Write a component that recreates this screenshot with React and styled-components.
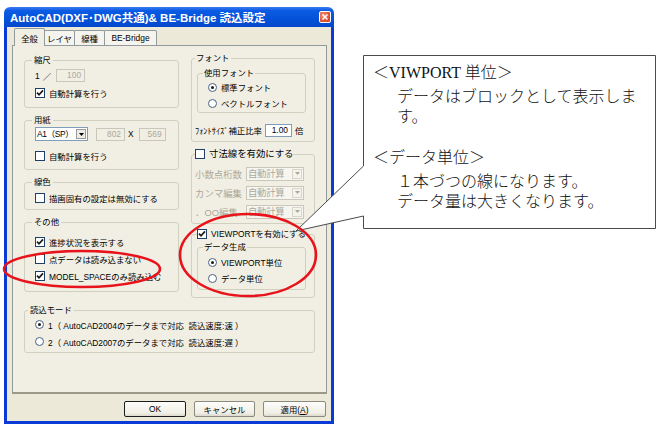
import React from "react";
import styled, { createGlobalStyle } from "styled-components";

const GlobalStyle = createGlobalStyle`
  html, body {
    margin: 0;
    padding: 0;
    background: #fff;
  }
  body {
    font-family: "Liberation Sans", "Noto Sans CJK JP", sans-serif;
  }
`;

const Page = styled.div`
    position: relative;
    width: 667px;
    height: 428px;
    box-sizing: border-box;
    padding: 7px 0 0 4px;
    overflow: hidden;
`;

const Window = styled.div`
    width: 330px;
    height: 417px;
    display: flex;
    flex-direction: column;
    font-size: 8.4px;
    color: #000;
`;

const TitleBar = styled.div`
    height: 20px;
    flex: none;
    display: flex;
    align-items: center;
    justify-content: space-between;
    padding: 0 3px 0 6px;
    border-radius: 6px 6px 0 0;
    background: linear-gradient(#3d7cf2 0%, #0b5be4 18%, #0452d8 60%, #0548cc 100%);
    color: #fff;
`;

const Title = styled.span`
    font-size: 11.5px;
    font-weight: bold;
    white-space: nowrap;
`;

const CloseBtn = styled.div`
    width: 12px;
    height: 12px;
    box-sizing: border-box;
    border: 1px solid #fff;
    border-radius: 2px;
    background: radial-gradient(circle at 35% 35%, #f49a7e, #da4a2c 70%);
    display: flex;
    align-items: center;
    justify-content: center;
`;

const Frame = styled.div`
    flex: 1;
    display: flex;
    flex-direction: column;
    padding: 1px 4px 4px 5px;
    border: 3px solid #0a3bd6;
    border-top: none;
    background: #ece9d8;
`;

const TabRow = styled.div`
    height: 17px;
    display: flex;
    align-items: flex-end;
    padding-left: 2px;
    position: relative;
    z-index: 1;
`;

const Tab = styled.div`
    width: ${p => p.$w}px;
    height: ${p => (p.$active ? 18 : 15)}px;
    margin-bottom: ${p => (p.$active ? -1 : 0)}px;
    margin-left: -1px;
    box-sizing: border-box;
    border: 1px solid #919b9c;
    border-bottom: none;
    border-radius: 2px 2px 0 0;
    background: ${p => (p.$active ? "#f1efe4" : "#f5f4ee")};
    display: flex;
    align-items: center;
    justify-content: center;
    white-space: nowrap;
    &:first-child {
        margin-left: 0;
    }
`;

const Panel = styled.div`
    height: 349px;
    box-sizing: border-box;
    border: 1px solid #919b9c;
    border-bottom: 2px solid #9c988a;
    background: #f1efe4;
    padding: 6px 11px 0 11px;
    display: flex;
    flex-direction: column;
    gap: 6px;
`;

const Columns = styled.div`
    display: grid;
    grid-template-columns: 155px 124px;
    column-gap: 12px;
    align-items: start;
`;

const Column = styled.div`
    display: flex;
    flex-direction: column;
    gap: 6px;
    margin-top: ${p => p.$mt || 0}px;
`;

const Group = styled.fieldset`
    margin: ${p => p.$m || "0"};
    height: ${p => p.$h}px;
    box-sizing: border-box;
    padding: ${p => p.$pt || 0}px ${p => p.$pr ?? 6}px 0 ${p => p.$pl ?? 10}px;
    border: 1px solid #d0d0bf;
    border-radius: 3px;
    min-width: 0;
    font-size: ${p => p.$fs || 8.4}px;
`;

const Legend = styled.legend`
    padding: 0 ${p => p.$pad ?? 2}px;
    margin-left: ${p => p.$ml || 0}px;
    line-height: 12px;
    height: 12px;
    display: flex;
    align-items: center;
    white-space: nowrap;
`;

const Row = styled.div`
    height: ${p => p.$h || 17}px;
    margin-top: ${p => p.$mt || 0}px;
    display: flex;
    align-items: center;
    white-space: nowrap;
    color: ${p => (p.$disabled ? "#aca899" : "inherit")};
`;

const RowLabel = styled.span`
    width: ${p => p.$w}px;
    flex: none;
`;

const Option = styled.span`
    display: inline-flex;
    align-items: center;
    gap: 4px;
    color: ${p => (p.$disabled ? "#aca899" : "inherit")};
`;

const Box = styled.span`
    width: 10px;
    height: 10px;
    box-sizing: border-box;
    flex: none;
    border: 1px solid #1e3f66;
    background: #fff;
    display: inline-flex;
    align-items: center;
    justify-content: center;
`;

const Circle = styled.span`
    width: 9px;
    height: 9px;
    box-sizing: border-box;
    flex: none;
    border: 1px solid #4a6285;
    border-radius: 50%;
    background: #fff;
    display: inline-flex;
    align-items: center;
    justify-content: center;
`;

const Dot = styled.span`
    width: 3px;
    height: 3px;
    border-radius: 50%;
    background: #1b1b1b;
`;

const Field = styled.span`
    width: ${p => p.$w}px;
    height: 13px;
    margin-left: ${p => p.$ml || 0}px;
    box-sizing: border-box;
    flex: none;
    border: 1px solid ${p => (p.$disabled ? "#c9c7ba" : "#7f9db9")};
    background: ${p => (p.$disabled ? "#f1efe4" : "#fff")};
    color: ${p => (p.$disabled ? "#aca899" : "#000")};
    text-align: right;
    padding-right: 3px;
    line-height: 11px;
`;

const Select = styled.span`
    width: ${p => p.$w}px;
    height: 14px;
    margin-left: ${p => p.$ml || 0}px;
    box-sizing: border-box;
    flex: none;
    display: flex;
    align-items: stretch;
    border: 1px solid ${p => (p.$disabled ? "#c9c7ba" : "#7f9db9")};
    background: ${p => (p.$disabled ? "#f6f5ef" : "#fff")};
    color: ${p => (p.$disabled ? "#aca899" : "#000")};
`;

const SelectText = styled.span`
    flex: 1;
    min-width: 0;
    padding-left: 1px;
    line-height: 12px;
    letter-spacing: -0.3px;
    white-space: nowrap;
`;

const ArrowBtn = styled.span`
    width: 10px;
    flex: none;
    box-sizing: border-box;
    margin: 1px;
    border: 1px solid ${p => (p.$disabled ? "#d8d6cc" : "#9a9a9a")};
    background: ${p => (p.$disabled ? "#f4f3ec" : "#ecebe6")};
    display: flex;
    align-items: center;
    justify-content: center;
`;

const Times = styled.span`
    margin-left: 3px;
`;

const Unit = styled.span`
    margin-left: 3px;
`;

const ButtonRow = styled.div`
    margin-top: 7px;
    display: flex;
    justify-content: flex-end;
    gap: 8px;
    padding-right: 1px;
`;

const Button = styled.button`
    width: ${p => p.$w}px;
    height: 16px;
    padding: 0;
    font: inherit;
    font-size: 8.4px;
    color: #000;
    border: 1px solid ${p => (p.$default ? "#1c1c1c" : "#8a8a80")};
    border-radius: 2px;
    background: linear-gradient(#fdfdfb, #f0eee4 80%, #dcd9cc);
    u {
        text-decoration: underline;
    }
`;

const Callout = styled.div`
    position: absolute;
    left: 290px;
    top: 50px;
    width: 370px;
    height: 186px;
`;

const BubbleShape = styled.svg`
    position: absolute;
    left: 0;
    top: 0;
`;

const CalloutText = styled.div`
    position: relative;
    padding: 13px 0 0 83px;
    font-family: "Liberation Serif", "Noto Sans CJK JP", serif;
    font-size: 16px;
    font-weight: 300;
    color: #111;
    white-space: nowrap;
`;

const Para = styled.div`
    margin-top: ${p => p.$mt || 0}px;
`;

const Head = styled.div`
    line-height: 20px;
`;

const Body = styled.div`
    margin-top: 4px;
    padding-left: 24px;
    line-height: 20px;
`;

const Marks = styled.svg`
    position: absolute;
    left: 0;
    top: 0;
    pointer-events: none;
`;

const CheckMark = () => (
    <svg width="8" height="8" viewBox="0 0 8 8">
        <path d="M1 3.6 L3 5.8 L7 1.4" fill="none" stroke="#1b1b1b" strokeWidth="1.7"/>
    </svg>
);

const Check = ({checked, disabled, children}) => (
    <Option $disabled={disabled}>
        <Box>{checked && <CheckMark/>}</Box>
        {children && <span>{children}</span>}
    </Option>
);

const Radio = ({checked, children}) => (
    <Option>
        <Circle>{checked && <Dot/>}</Circle>
        <span>{children}</span>
    </Option>
);

const Arrow = ({disabled}) => (
    <svg width="5" height="3" viewBox="0 0 5 3">
        <path d="M0 0 H5 L2.5 3 Z" fill={disabled ? "#aca899" : "#000"}/>
    </svg>
);

const Dropdown = ({w, ml, disabled, children}) => (
    <Select $w={w} $ml={ml} $disabled={disabled}>
        <SelectText>{children}</SelectText>
        <ArrowBtn $disabled={disabled}><Arrow disabled={disabled}/></ArrowBtn>
    </Select>
);

export default function App() {
    return (
        <>
            <GlobalStyle/>
            <Page>
                <Window>
                    <TitleBar>
                        <Title>AutoCAD(DXF･DWG共通)&amp; BE-Bridge 読込設定</Title>
                        <CloseBtn>
                            <svg width="6" height="6" viewBox="0 0 6 6">
                                <path d="M0.5 0.5 L5.5 5.5 M5.5 0.5 L0.5 5.5" stroke="#fff" strokeWidth="1.4"/>
                            </svg>
                        </CloseBtn>
                    </TitleBar>
                    <Frame>
                        <TabRow>
                            <Tab $active $w={31}>全般</Tab>
                            <Tab $w={31}>レイヤ</Tab>
                            <Tab $w={31}>線種</Tab>
                            <Tab $w={53}>BE-Bridge</Tab>
                        </TabRow>
                        <Panel>
                            <Columns>
                                <Column $mt={2}>
                                    <Group $h={54} $pt={1}>
                                        <Legend $ml={-3}>縮尺</Legend>
                                        <Row>
                                            <span>1</span>
                                            <Unit>／</Unit>
                                            <Field $w={29} $ml={5} $disabled>100</Field>
                                        </Row>
                                        <Row><Check checked>自動計算を行う</Check></Row>
                                    </Group>
                                    <Group $h={56}>
                                        <Legend $ml={-3}>用紙</Legend>
                                        <Row $h={16}>
                                            <Dropdown w={53}>A1（SP）</Dropdown>
                                            <Field $w={29} $ml={8} $disabled>802</Field>
                                            <Times>X</Times>
                                            <Field $w={27} $ml={5} $disabled>569</Field>
                                        </Row>
                                        <Row $mt={5}><Check>自動計算を行う</Check></Row>
                                    </Group>
                                    <Group $h={34} $pt={1}>
                                        <Legend $ml={-3}>線色</Legend>
                                        <Row><Check>描画固有の設定は無効にする</Check></Row>
                                    </Group>
                                    <Group $h={76} $pt={5}>
                                        <Legend $ml={-3}>その他</Legend>
                                        <Row><Check checked>進捗状況を表示する</Check></Row>
                                        <Row><Check>点データは読み込まない</Check></Row>
                                        <Row><Check checked>MODEL_SPACEのみ読み込む</Check></Row>
                                    </Group>
                                </Column>
                                <Column>
                                    <Group $h={90} $pl={3} $pr={8}>
                                        <Legend $pad={1}>フォント</Legend>
                                        <Group $h={46} $pl={10} $pr={4} $m="3px 0 0 2px">
                                            <Legend $ml={-5} $pad={1}>使用フォント</Legend>
                                            <Row $h={16}><Radio checked>標準フォント</Radio></Row>
                                            <Row $h={16}><Radio>ベクトルフォント</Radio></Row>
                                        </Group>
                                        <Row $h={18} $mt={8}>
                                            <span>ﾌｫﾝﾄｻｲｽﾞ補正比率</span>
                                            <Field $w={27} $ml={3}>1.00</Field>
                                            <Unit>倍</Unit>
                                        </Row>
                                    </Group>
                                    <Group $h={76} $pl={3} $pr={8} $pt={4} $fs={9.4}>
                                        <Legend $pad={0}><Check>寸法線を有効にする</Check></Legend>
                                        <Row $h={19} $disabled>
                                            <RowLabel $w={51}>小数点桁数</RowLabel>
                                            <Dropdown w={58} disabled>自動計算</Dropdown>
                                        </Row>
                                        <Row $h={19} $disabled>
                                            <RowLabel $w={51}>カンマ編集</RowLabel>
                                            <Dropdown w={58} disabled>自動計算</Dropdown>
                                        </Row>
                                        <Row $h={19} $disabled>
                                            <RowLabel $w={51}>．OO編集</RowLabel>
                                            <Dropdown w={58} disabled>自動計算</Dropdown>
                                        </Row>
                                    </Group>
                                    <Group $h={70} $pl={3} $pr={8} $m="-2px 0 0 0">
                                        <Legend $pad={0} $ml={2}><Check checked>VIEWPORTを有効にする</Check></Legend>
                                        <Group $h={49} $pl={10} $pr={4} $pt={1} $m="1px 0 0 2px">
                                            <Legend $ml={-5} $pad={1}>データ生成</Legend>
                                            <Row $h={16}><Radio checked>VIEWPORT単位</Radio></Row>
                                            <Row $h={16}><Radio>データ単位</Radio></Row>
                                        </Group>
                                    </Group>
                                </Column>
                            </Columns>
                            <Group $h={49}>
                                <Legend $ml={-7}>読込モード</Legend>
                                <Row><Radio checked>1（ AutoCAD2004のデータまで対応&nbsp; 読込速度:速 ）</Radio></Row>
                                <Row><Radio>2（ AutoCAD2007のデータまで対応&nbsp; 読込速度:遅 ）</Radio></Row>
                            </Group>
                        </Panel>
                        <ButtonRow>
                            <Button $w={62} $default>OK</Button>
                            <Button $w={61}>キャンセル</Button>
                            <Button $w={63}>適用(<u>A</u>)</Button>
                        </ButtonRow>
                    </Frame>
                </Window>

                <Callout>
                    <BubbleShape width="370" height="186" viewBox="0 0 370 186">
                        <path
                            d="M73.5 5.5 H365.5 V178.5 H73.5 V166 L6 181 L73.5 116 Z"
                            fill="#fff"
                            stroke="#4a4a4a"
                            strokeWidth="1"
                        />
                    </BubbleShape>
                    <CalloutText>
                        <Para>
                            <Head>＜VIWPORT 単位＞</Head>
                            <Body>データはブロックとして表示しま<br/>す。</Body>
                        </Para>
                        <Para $mt={21}>
                            <Head>＜データ単位＞</Head>
                            <Body>１本づつの線になります。<br/>データ量は大きくなります。</Body>
                        </Para>
                    </CalloutText>
                </Callout>

                <Marks width="667" height="428" viewBox="0 0 667 428">
                    <ellipse cx="82" cy="269" rx="78" ry="18" fill="none" stroke="#e8141b" strokeWidth="2.6"/>
                    <ellipse cx="248" cy="255" rx="68" ry="41" fill="none" stroke="#e8141b" strokeWidth="2.6"/>
                </Marks>
            </Page>
        </>
    );
}
